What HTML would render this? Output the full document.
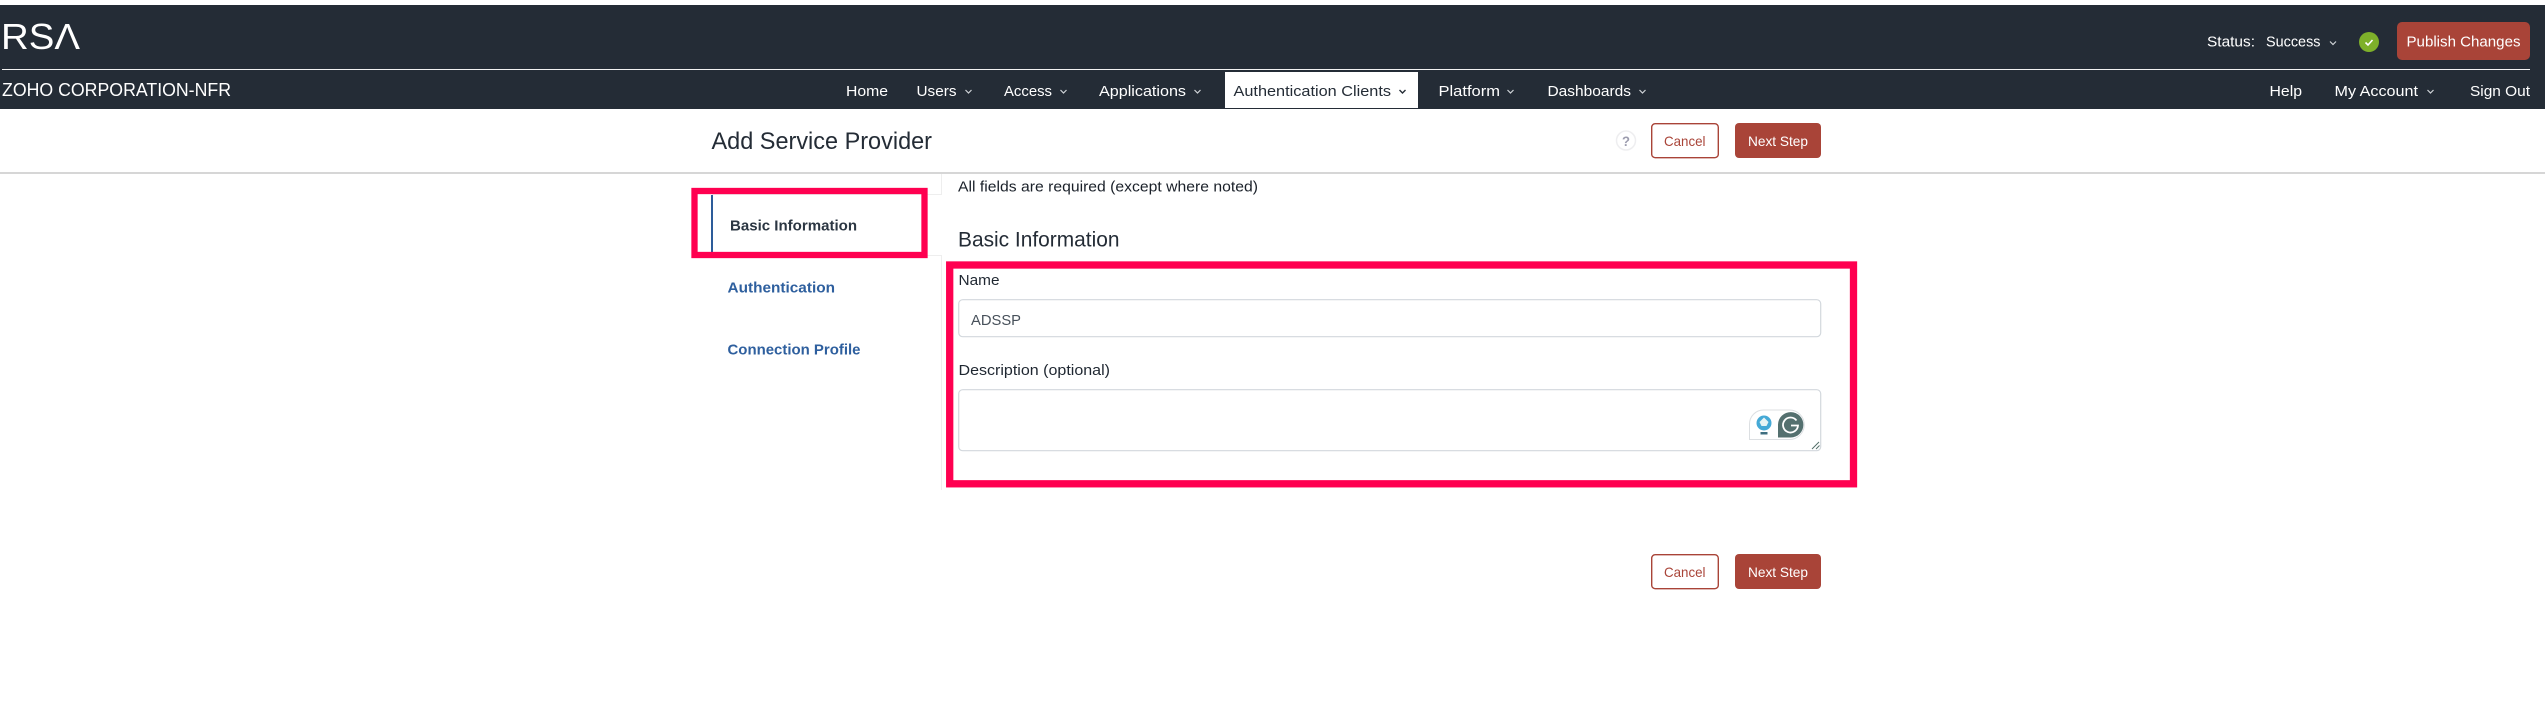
<!DOCTYPE html>
<html lang="en">
<head>
<meta charset="utf-8">
<title>Add Service Provider</title>
<style>
html,body{margin:0;padding:0;background:#fff;width:2545px;height:718px;overflow:hidden}
svg{display:block;position:absolute;left:0;top:0}
text{font-family:"Liberation Sans",sans-serif}
.n{font-size:15px;fill:#fff}
.l{font-size:15px;fill:#1f2731}
.side{font-size:15px;font-weight:700}
.c{fill:none;stroke:#d0d4d8;stroke-width:1.2}
</style>
</head>
<body>
<svg width="2545" height="718" viewBox="0 0 2545 718" xmlns="http://www.w3.org/2000/svg">
<rect width="2545" height="718" fill="#fff"/>
<!-- header -->
<rect x="0" y="5" width="2545" height="104" fill="#242c36"/>
<rect x="2" y="69" width="2528" height="1" fill="#f2f2f2"/>
<text x="1" y="49" font-size="36" fill="#fff" textLength="79" lengthAdjust="spacingAndGlyphs">RSΛ</text>
<text x="2" y="96" font-size="18" fill="#fff" textLength="229" lengthAdjust="spacingAndGlyphs">ZOHO CORPORATION-NFR</text>

<!-- nav -->
<rect x="1225" y="72" width="193" height="36" fill="#fff"/>
<text class="n" x="846" y="96" textLength="42" lengthAdjust="spacingAndGlyphs">Home</text>
<text class="n" x="916.5" y="96" textLength="40" lengthAdjust="spacingAndGlyphs">Users</text>
<polyline class="c" points="965.5,90 968.5,93 971.5,90"/>
<text class="n" x="1004" y="96" textLength="48" lengthAdjust="spacingAndGlyphs">Access</text>
<polyline class="c" points="1060.5,90 1063.5,93 1066.5,90"/>
<text class="n" x="1099" y="96" textLength="87" lengthAdjust="spacingAndGlyphs">Applications</text>
<polyline class="c" points="1194.5,90 1197.5,93 1200.5,90"/>
<text x="1233.5" y="96" font-size="15" fill="#242c36" textLength="157.5" lengthAdjust="spacingAndGlyphs">Authentication Clients</text>
<polyline points="1399.5,90 1402.5,93 1405.5,90" fill="none" stroke="#242c36" stroke-width="1.4"/>
<text class="n" x="1438.5" y="96" textLength="61.5" lengthAdjust="spacingAndGlyphs">Platform</text>
<polyline class="c" points="1507.5,90 1510.5,93 1513.5,90"/>
<text class="n" x="1547.5" y="96" textLength="83.5" lengthAdjust="spacingAndGlyphs">Dashboards</text>
<polyline class="c" points="1639.5,90 1642.5,93 1645.5,90"/>

<!-- right of header -->
<text class="n" x="2207" y="46.5" textLength="48" lengthAdjust="spacingAndGlyphs">Status:</text>
<text class="n" x="2266" y="46.5" textLength="54.5" lengthAdjust="spacingAndGlyphs">Success</text>
<polyline class="c" points="2330,41.500 2333,44.500 2336,41.500"/>
<circle cx="2369" cy="42" r="10" fill="#7eb02a"/>
<polyline points="2365.500,42.500 2368,45 2372.500,40" fill="none" stroke="#fff" stroke-width="1.600"/>
<rect x="2397" y="22" width="133" height="38" rx="5" fill="#a94438"/>
<text x="2406.5" y="46.5" font-size="15" fill="#fff" textLength="114" lengthAdjust="spacingAndGlyphs">Publish Changes</text>
<text class="n" x="2269.5" y="96" textLength="32.5" lengthAdjust="spacingAndGlyphs">Help</text>
<text class="n" x="2334.5" y="96" textLength="83.5" lengthAdjust="spacingAndGlyphs">My Account</text>
<polyline class="c" points="2427.500,90 2430.500,93 2433.500,90"/>
<text class="n" x="2470" y="96" textLength="60" lengthAdjust="spacingAndGlyphs">Sign Out</text>

<!-- page title bar -->
<text x="711.5" y="149" font-size="24" fill="#242c36" textLength="220.5" lengthAdjust="spacingAndGlyphs">Add Service Provider</text>
<circle cx="1626" cy="140.5" r="9.5" fill="#fff" stroke="#eeeef0" stroke-width="1.5"/>
<text x="1622" y="146" font-size="14" font-weight="700" fill="#9c9cae" textLength="8" lengthAdjust="spacingAndGlyphs">?</text>
<rect x="1651.7" y="123.7" width="66.6" height="34" rx="3.5" fill="#fff" stroke="#a94438" stroke-width="1.4"/>
<text x="1664" y="146" font-size="14" fill="#a94438" textLength="41.5" lengthAdjust="spacingAndGlyphs">Cancel</text>
<rect x="1735" y="123" width="86" height="35" rx="4" fill="#a94438"/>
<text x="1748" y="146" font-size="14" fill="#fff" textLength="60" lengthAdjust="spacingAndGlyphs">Next Step</text>
<rect x="0" y="172" width="2545" height="2" fill="#d6d6d6"/>

<!-- sidebar lines -->
<rect x="941" y="174" width="1" height="21" fill="#eeeeee"/>
<rect x="941" y="255" width="1" height="235" fill="#eeeeee"/>
<rect x="712" y="194" width="230" height="1" fill="#eeeeee"/>
<rect x="712" y="255" width="230" height="1" fill="#eeeeee"/>
<rect x="711" y="195" width="2" height="59" fill="#2d5c9a"/>
<text class="side" x="730" y="230.5" fill="#2b3642" textLength="127" lengthAdjust="spacingAndGlyphs">Basic Information</text>
<text class="side" x="727.5" y="292.5" fill="#2e5f9e" textLength="107.5" lengthAdjust="spacingAndGlyphs">Authentication</text>
<text class="side" x="727.5" y="354.5" fill="#2e5f9e" textLength="133" lengthAdjust="spacingAndGlyphs">Connection Profile</text>

<!-- form -->
<text x="958" y="191.5" font-size="15" fill="#1a2029" textLength="300" lengthAdjust="spacingAndGlyphs">All fields are required (except where noted)</text>
<text x="958" y="246.5" font-size="21" fill="#242c36" textLength="161.5" lengthAdjust="spacingAndGlyphs">Basic Information</text>
<text class="l" x="958.5" y="285" textLength="41" lengthAdjust="spacingAndGlyphs">Name</text>
<rect x="958.7" y="299.7" width="862" height="37" rx="4" fill="#fff" stroke="#d3d8dd" stroke-width="1.2"/>
<text x="971" y="325" font-size="15" fill="#47505a" textLength="50" lengthAdjust="spacingAndGlyphs">ADSSP</text>
<text class="l" x="958.5" y="375" textLength="151.5" lengthAdjust="spacingAndGlyphs">Description (optional)</text>
<rect x="958.7" y="389.7" width="862" height="61" rx="4" fill="#fff" stroke="#d3d8dd" stroke-width="1.2"/>

<!-- grammarly widget -->
<path d="M1749.5 439.5V424a14 14 0 0 1 14-14h26a14.75 14.75 0 0 1 0 29.5h-40z" fill="#fff" stroke="#dcdfe2" stroke-width="1"/>
<circle cx="1764" cy="423" r="7.5" fill="#45a9d6"/>
<path d="M1764 417.5l4.500 4.500-2 4h-5l-2-4z" fill="#e8f4f4"/>
<rect x="1760.5" y="432" width="7" height="2.500" fill="#3f6f80"/>
<path d="M1778 437.500V424.500a12.700 12.700 0 1 1 12.700 13z" fill="#54706f"/>
<path d="M1796.5 420.500a7.500 7.500 0 1 0 1.500 5h-7" fill="none" stroke="#fff" stroke-width="1.800"/>
<path d="M1812 449l7-7M1816 449l3.500-3.500" stroke="#55706b" stroke-width="1"/>

<!-- annotations -->
<rect x="694.5" y="191" width="230" height="64" fill="none" stroke="#ff0050" stroke-width="6.3"/>
<rect x="949.7" y="265" width="903.8" height="218.8" fill="none" stroke="#ff0050" stroke-width="7.3"/>

<!-- bottom buttons -->
<rect x="1651.7" y="554.7" width="66.6" height="34" rx="3.5" fill="#fff" stroke="#a94438" stroke-width="1.4"/>
<text x="1664" y="577" font-size="14" fill="#a94438" textLength="41.5" lengthAdjust="spacingAndGlyphs">Cancel</text>
<rect x="1735" y="554" width="86" height="35" rx="4" fill="#a94438"/>
<text x="1748" y="577" font-size="14" fill="#fff" textLength="60" lengthAdjust="spacingAndGlyphs">Next Step</text>
</svg>
</body>
</html>
